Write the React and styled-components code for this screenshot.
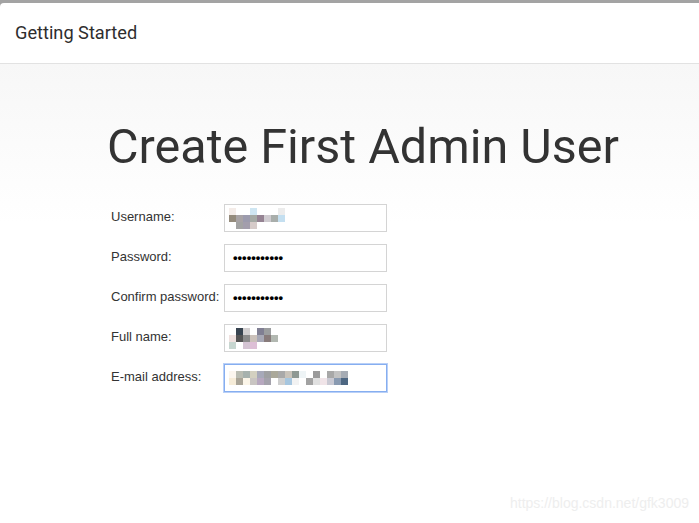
import React from 'react'
import styled, { createGlobalStyle } from 'styled-components'

const GlobalStyle = createGlobalStyle`
  html, body {
    margin: 0;
    padding: 0;
    background: #a3a3a3;
  }
`

const Frame = styled.div`
  width: 699px;
  height: 523px;
  padding-top: 3px;
  box-sizing: border-box;
  background: #a3a3a3;
  overflow: hidden;
`

const Window = styled.div`
  position: relative;
  height: 520px;
  background: #ffffff;
  border-top-left-radius: 4px;
  display: flex;
  flex-direction: column;
`

const Header = styled.div`
  height: 59px;
  flex-shrink: 0;
  border-bottom: 1px solid #e2e2e2;
  display: flex;
  align-items: center;
  padding-left: 15px;
  font-family: Roboto, 'Liberation Sans', sans-serif;
  font-size: 18.2px;
  font-weight: 400;
  color: #2e2e2e;
  padding-bottom: 1px;
`

const Body = styled.div`
  flex: 1;
  background: linear-gradient(to bottom, #f7f7f7 0px, #fbfbfb 80px, #ffffff 160px);
  display: flex;
  flex-direction: column;
  padding-left: 111px;
`

const Title = styled.h1`
  margin: 51px 0 0 -4px;
  font-family: Roboto, 'Liberation Sans', sans-serif;
  font-weight: 400;
  font-size: 48.5px;
  line-height: 64px;
  color: #333;
`

const Form = styled.div`
  margin-top: 25px;
  display: grid;
  grid-template-columns: 113px 163px;
  row-gap: 12px;
  align-items: center;
`

const Label = styled.label`
  font-family: 'Liberation Sans', Arial, sans-serif;
  font-size: 13px;
  color: #333;
  margin-top: -4px;
`

const Field = styled.div`
  height: 28px;
  box-sizing: border-box;
  border: 1px solid ${p => (p.$focused ? '#86aef0' : '#d4d4d4')};
  box-shadow: ${p => (p.$focused ? '0 0 0 1px #b9d0f7' : 'none')};
  background: #fff;
  display: flex;
  align-items: center;
  padding-left: 8px;
`

const Dots = styled.span`
  font-family: 'Liberation Sans', Arial, sans-serif;
  font-size: 13px;
  font-weight: 700;
  color: #000;
  margin-top: -1px;
`

const Mosaic = styled.div`
  display: grid;
  grid-template-columns: repeat(${p => p.$cols}, 7px);
  grid-auto-rows: 7px;
  margin-left: ${p => p.$offset || 0}px;
`

const Cell = styled.span`
  background: ${p => p.$c};
`

const Watermark = styled.div`
  position: absolute;
  right: 10px;
  bottom: 12px;
  font-family: 'Liberation Sans', Arial, sans-serif;
  font-size: 14px;
  color: #eeeeee;
`

const userCells = [
  '#f4ece8', '#fff', '#fff', '#cfe6f2', '#fff', '#fff', '#fff', '#ececec',
  '#fff', '#948b7c', '#a8a3a5', '#9c9bad', '#a4a9a4', '#958393', '#cfcbd0', '#a9aeab', '#c4dff0',
  '#fff', '#fff', '#a3a3a3', '#a39eac', '#d6cbc9', '#fff', '#fff', '#fff', '#fff',
]

const nameCells = [
  '#fff', '#384450', '#d2cfd0', '#fff', '#807f93', '#9b9d9f', '#fff',
  '#efe1df', '#545454', '#8b8b8b', '#cbc1ba', '#a7a8b6', '#887b7b', '#b2b8b1',
  '#c7d6d0', '#fff', '#d4c4d3', '#ddbfd6', '#fff', '#fff', '#fff',
]

const mailCells = [
  '#fbf6ef', '#b9bcb2', '#a6b1ad', '#d3d0c0', '#a7a9b9', '#9fa0a2', '#aaa89a', '#a9a9a9', '#c9c3ba', '#8e9893', '#eef4f6', '#fff', '#9a9a9a', '#fff', '#a8a8a8', '#c2c2c2', '#a6acb4',
  '#f6ecd8', '#a9a497', '#fbf5e8', '#c9c5c2', '#b7a8bf', '#a4a2ac', '#fff', '#cfcfcf', '#a6c6df', '#f2f2f2', '#fff', '#a2a2a2', '#e0e0e0', '#f0e4e8', '#c9c9d3', '#899ab1', '#4d6782',
]

const renderMosaic = (cells, cols, offset) => (
  <Mosaic $cols={cols} $offset={offset}>
    {cells.map((c, i) => <Cell key={i} $c={c} />)}
  </Mosaic>
)

export default function App() {
  return (
    <>
      <GlobalStyle />
      <Frame>
        <Window>
          <Header>Getting Started</Header>
          <Body>
            <Title>Create First Admin User</Title>
            <Form>
              <Label>Username:</Label>
              <Field>{renderMosaic(userCells, 9, -4)}</Field>
              <Label>Password:</Label>
              <Field><Dots>•••••••••••</Dots></Field>
              <Label>Confirm password:</Label>
              <Field><Dots>•••••••••••</Dots></Field>
              <Label>Full name:</Label>
              <Field>{renderMosaic(nameCells, 7, -4)}</Field>
              <Label>E-mail address:</Label>
              <Field $focused>{renderMosaic(mailCells, 17, -4)}</Field>
            </Form>
          </Body>
          <Watermark>https://blog.csdn.net/gfk3009</Watermark>
        </Window>
      </Frame>
    </>
  )
}
